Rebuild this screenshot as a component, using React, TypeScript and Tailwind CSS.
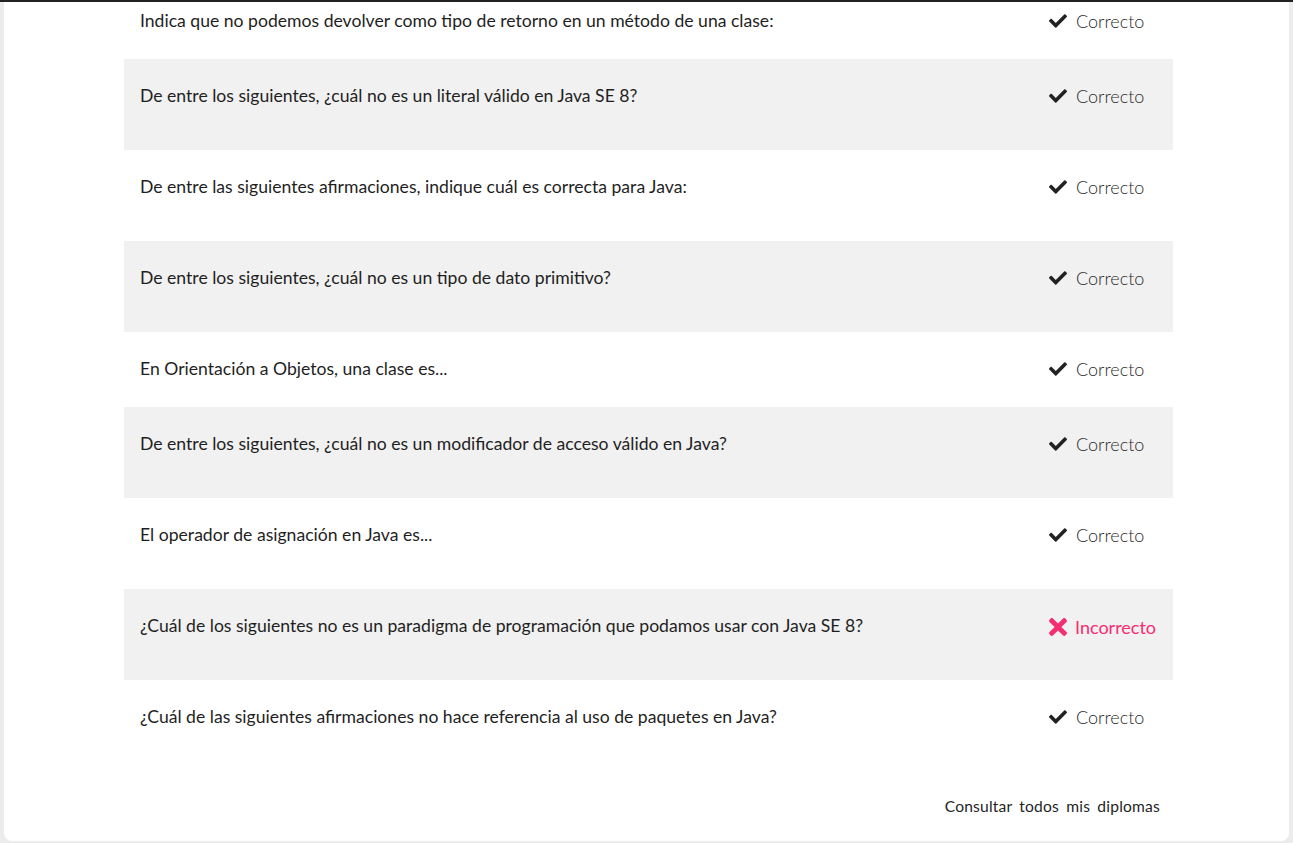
import React from 'react';
import { FaCheck, FaTimes } from 'react-icons/fa';

type Answer = { q: string; ok: boolean; tall: boolean };

const answers: Answer[] = [
    { q: 'Indica que no podemos devolver como tipo de retorno en un método de una clase:', ok: true, tall: false },
    { q: 'De entre los siguientes, ¿cuál no es un literal válido en Java SE 8?', ok: true, tall: true },
    { q: 'De entre las siguientes afirmaciones, indique cuál es correcta para Java:', ok: true, tall: true },
    { q: 'De entre los siguientes, ¿cuál no es un tipo de dato primitivo?', ok: true, tall: true },
    { q: 'En Orientación a Objetos, una clase es...', ok: true, tall: false },
    { q: 'De entre los siguientes, ¿cuál no es un modificador de acceso válido en Java?', ok: true, tall: true },
    { q: 'El operador de asignación en Java es...', ok: true, tall: true },
    { q: '¿Cuál de los siguientes no es un paradigma de programación que podamos usar con Java SE 8?', ok: false, tall: true },
    { q: '¿Cuál de las siguientes afirmaciones no hace referencia al uso de paquetes en Java?', ok: true, tall: false },
];

export default function App() {
    return (
        <div
            className="h-[843px] w-[1293px] overflow-hidden bg-[#ececec]"
            style={{ fontFamily: 'Lato, "Open Sans", sans-serif' }}
        >
            <div className="h-[2px] bg-[#222]" />
            <div className="ml-[4px] mr-[4px] h-[839px] overflow-hidden rounded-b-[8px] bg-white">
                {/* Results list */}
                <div className="-mt-[18px] pl-[120px] pr-[116px]">
                    {answers.map((a, i) => (
                        <div
                            key={i}
                            className={`flex items-start pt-[25px] ${a.tall ? 'h-[91px]' : 'h-[75px]'} ${i % 2 === 1 ? 'bg-[#f1f1f1]' : 'bg-white'}`}
                        >
                            <div className="flex-1 pl-[16px] text-[17.6px] leading-[24px] text-[#1f1f1f]">{a.q}</div>
                            <div className="w-[124px] shrink-0">
                                {a.ok ? (
                                    <span className="flex items-center gap-[9px] text-[18px] font-light leading-[24px] text-[#2a2a2a]">
                                        <FaCheck className="h-[18px] w-[18px] text-[#222]" />
                                        Correcto
                                    </span>
                                ) : (
                                    <span className="flex items-center gap-[8px] text-[18px] leading-[24px] text-[#f72d72]">
                                        <FaTimes className="h-[26px] w-[18px]" />
                                        Incorrecto
                                    </span>
                                )}
                            </div>
                        </div>
                    ))}
                </div>

                {/* Footer link */}
                <div className="flex justify-end pr-[129px] pt-[41px]">
                    <a className="text-[15.6px] leading-[20px] tracking-[0.2px] text-[#1f1f1f] [word-spacing:3px]">
                        Consultar todos mis diplomas
                    </a>
                </div>
            </div>
        </div>
    );
}
